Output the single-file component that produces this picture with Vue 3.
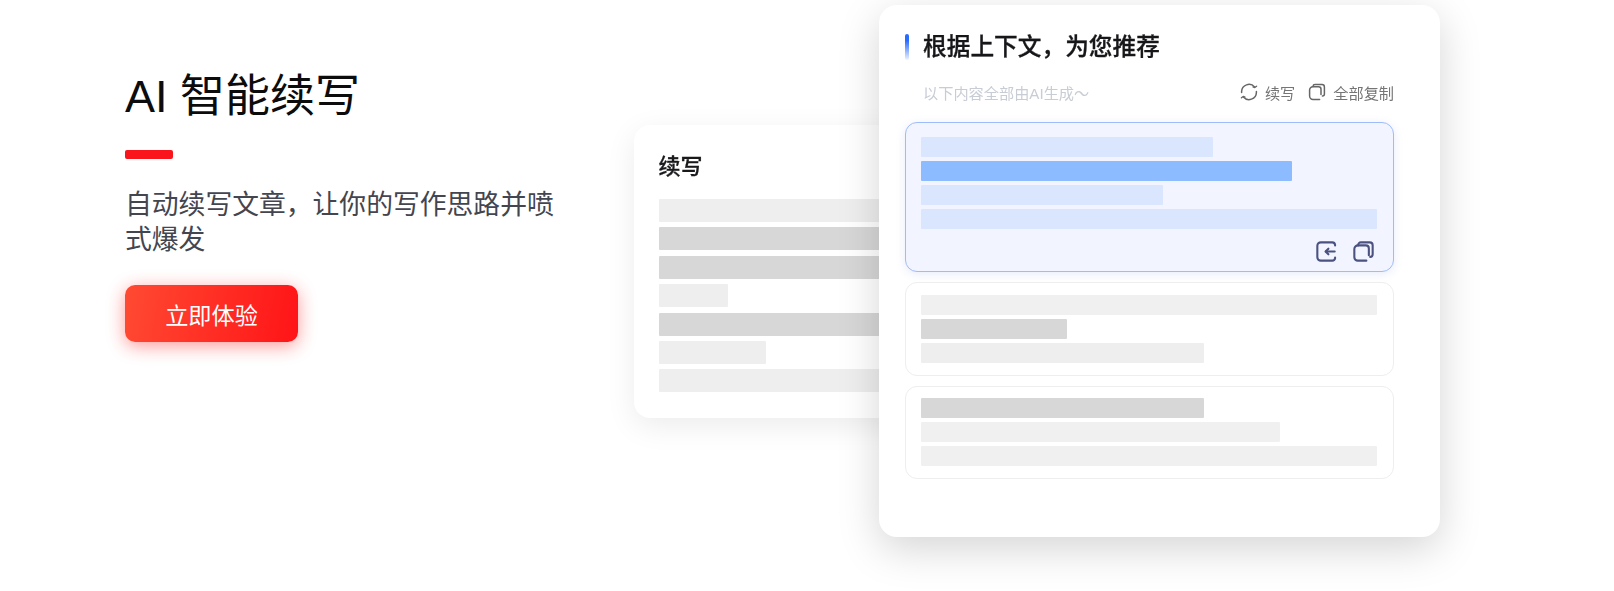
<script setup>
const backBars = [
  { w: 300, tone: 'light' },
  { w: 300, tone: 'dark' },
  { w: 300, tone: 'dark' },
  { w: 69, tone: 'light' },
  { w: 300, tone: 'dark' },
  { w: 107, tone: 'light' },
  { w: 300, tone: 'light' }
]
const activeBars = [
  { w: 292, tone: 'pale' },
  { w: 371, tone: 'blue' },
  { w: 242, tone: 'pale' },
  { w: 456, tone: 'pale' }
]
const plainItems = [
  [
    { w: 456, tone: 'soft' },
    { w: 146, tone: 'dark' },
    { w: 283, tone: 'light' }
  ],
  [
    { w: 283, tone: 'dark' },
    { w: 359, tone: 'soft' },
    { w: 456, tone: 'soft' }
  ]
]
</script>

<template>
  <main class="hero">
    <section class="intro">
      <h1 class="heading">AI 智能续写</h1>
      <div class="rule"></div>
      <p class="lead">自动续写文章，让你的写作思路并喷式爆发</p>
      <button class="cta" type="button">立即体验</button>
    </section>

    <section class="back-card">
      <h2 class="back-title">续写</h2>
      <div class="back-bars">
        <div v-for="(b, i) in backBars" :key="i" class="bar tall" :class="b.tone" :style="{ width: b.w + 'px' }"></div>
      </div>
    </section>

    <section class="front-card">
      <div class="title-row">
        <span class="accent"></span>
        <h2 class="front-title">根据上下文，为您推荐</h2>
      </div>
      <div class="sub-row">
        <span class="hint">以下内容全部由AI生成～</span>
        <span class="tools">
          <span class="tool">
            <svg class="tool-icon" viewBox="0 0 18 18" fill="none" stroke="#666" stroke-width="1.5" stroke-linecap="round" stroke-linejoin="round">
              <path d="M1.6 9.6V8.6A7.4 7.4 0 0 1 14.6 4" />
              <path d="M16.6 3.2 14.8 4.6 13 4" stroke-width="1.3" />
              <path d="M16.4 8.4V9.4A7.4 7.4 0 0 1 3.4 14" />
              <path d="M1.4 14.8 3.2 13.4 5 14" stroke-width="1.3" />
            </svg>
            续写
          </span>
          <span class="tool">
            <svg class="tool-icon" viewBox="0 0 18 18" fill="none" stroke="#666" stroke-width="1.5" stroke-linecap="round" stroke-linejoin="round">
              <path d="M5 3.6V3.4A2 2 0 0 1 7 1.6H14A2.4 2.4 0 0 1 16.4 4V11A2 2 0 0 1 14.4 13" />
              <path d="M11.6 16.4H5A3.4 3.4 0 0 1 1.6 13V7A3.2 3.2 0 0 1 4.8 3.8H10.6A2.4 2.4 0 0 1 13 6.2V11.6" />
            </svg>
            全部复制
          </span>
        </span>
      </div>

      <article class="item active">
        <div class="bars">
          <div v-for="(b, i) in activeBars" :key="i" class="bar" :class="b.tone" :style="{ width: b.w + 'px' }"></div>
        </div>
        <div class="actions">
          <svg class="action-icon" viewBox="0 0 22 22" fill="none" stroke="#4b5280" stroke-width="2.2" stroke-linecap="round" stroke-linejoin="round">
            <path d="M20 4.6V4A3 3 0 0 0 17 1.4H5A3.6 3.6 0 0 0 1.4 5V17A3.6 3.6 0 0 0 5 20.6H17A3 3 0 0 0 20 18V17.4" />
            <path d="M19.6 11H10.4" />
            <path d="M13 8 10 11 13 14" />
          </svg>
          <svg class="action-icon" viewBox="0 0 22 22" fill="none" stroke="#4b5280" stroke-width="2.2" stroke-linecap="round" stroke-linejoin="round">
            <path d="M5.4 4.6V4.2A2.8 2.8 0 0 1 8.2 1.4H17.6A3 3 0 0 1 20.6 4.4V13.8A2.8 2.8 0 0 1 18 16.6" />
            <path d="M14 20.6H5A3.6 3.6 0 0 1 1.4 17V8.4A3.8 3.8 0 0 1 5.2 4.6H13.4A3.2 3.2 0 0 1 16.6 7.8V15" />
          </svg>
        </div>
      </article>

      <article v-for="(group, g) in plainItems" :key="g" class="item plain">
        <div class="bars">
          <div v-for="(b, i) in group" :key="i" class="bar" :class="b.tone" :style="{ width: b.w + 'px' }"></div>
        </div>
      </article>
    </section>
  </main>
</template>

<style>
html,
body {
  margin: 0;
  background: #fff;
}
</style>

<style scoped>
.hero {
  display: flex;
  align-items: flex-start;
  width: 1614px;
  height: 591px;
  overflow: hidden;
  box-sizing: border-box;
  padding: 5px 0 0 125px;
  background: #fff;
  font-family: "Liberation Sans", "Noto Sans CJK SC", sans-serif;
}

.intro {
  width: 509px;
  flex: none;
  padding-top: 62px;
  box-sizing: border-box;
}

.heading {
  margin: 0;
  font-size: 45px;
  line-height: 60px;
  font-weight: 400;
  color: #0c0c0c;
}

.rule {
  width: 48px;
  height: 9px;
  margin-top: 23px;
  border-radius: 2px;
  background: #fa141c;
}

.lead {
  width: 440px;
  margin: 29px 0 0;
  font-size: 26.8px;
  line-height: 34.6px;
  color: #43454f;
}

.cta {
  display: block;
  width: 173px;
  height: 57px;
  margin-top: 28px;
  padding: 0;
  border: 0;
  border-radius: 10px;
  background: linear-gradient(100deg, #ff4a32 0%, #ff1417 100%);
  box-shadow: 0 4px 18px rgba(255, 40, 40, 0.48);
  color: #fff;
  font-family: inherit;
  font-size: 23.2px;
}

.back-card {
  width: 300px;
  height: 293px;
  flex: none;
  margin: 120px -55px 0 0;
  padding: 25px 0 0 24.5px;
  box-sizing: border-box;
  overflow: hidden;
  border-radius: 16px;
  background: #fff;
  box-shadow: 0 8px 30px rgba(0, 0, 0, 0.08);
}

.back-title {
  margin: 0;
  font-size: 22px;
  line-height: 34px;
  font-weight: 500;
  color: #1a1a1c;
  -webkit-text-stroke: 0.3px #1a1a1c;
  filter: blur(0.3px);
}

.back-bars {
  display: flex;
  flex-direction: column;
  gap: 5.4px;
  margin-top: 15px;
}

.front-card {
  position: relative;
  width: 561px;
  height: 532px;
  flex: none;
  padding: 29px 46px 0 26px;
  box-sizing: border-box;
  border-radius: 18px;
  background: #fff;
  box-shadow: 0 12px 42px rgba(0, 0, 0, 0.17);
}

.title-row {
  display: flex;
  align-items: center;
  height: 26px;
}

.accent {
  width: 4px;
  height: 26px;
  margin-right: 14px;
  border-radius: 2px;
  background: linear-gradient(180deg, #2a6bff 0%, #2a6bff 25%, rgba(120, 165, 255, 0.12) 100%);
}

.front-title {
  margin: 0;
  font-size: 23.7px;
  line-height: 26px;
  font-weight: 500;
  color: #17171a;
  -webkit-text-stroke: 0.3px #17171a;
  filter: blur(0.3px);
}

.sub-row {
  display: flex;
  align-items: center;
  justify-content: space-between;
  height: 24px;
  margin-top: 20px;
  padding-left: 18px;
  filter: blur(0.3px);
}

.hint {
  font-size: 15.2px;
  color: #c8ccd4;
}

.tools {
  display: flex;
  gap: 13px;
}

.tool {
  display: flex;
  align-items: center;
  gap: 7px;
  font-size: 15.2px;
  color: #757575;
}

.tool-icon {
  width: 18px;
  height: 18px;
}

.item {
  box-sizing: border-box;
  margin-top: 10px;
  padding: 11.5px 15px 0 14.5px;
  border-radius: 12px;
}

.active {
  height: 150px;
  margin-top: 18px;
  padding-top: 13.5px;
  border: 1.5px solid #9fbcfa;
  background: #f2f5ff;
  box-shadow: 0 2px 10px rgba(90, 120, 220, 0.14);
}

.plain {
  height: 93.5px;
  border: 1.5px solid #eeeeee;
}

.bars {
  display: flex;
  flex-direction: column;
  gap: 4px;
}

.bar {
  height: 20px;
  flex: none;
  border-radius: 1px;
}

.bar.tall {
  height: 23px;
}

.pale {
  background: #d9e6fe;
}

.blue {
  background: #8cbbff;
}

.dark {
  background: #d7d7d7;
}

.light {
  background: #eeeeee;
}

.soft {
  background: #f0f0f0;
}

.actions {
  display: flex;
  justify-content: flex-end;
  gap: 16px;
  margin-top: 12.5px;
  padding-right: 4px;
}

.action-icon {
  width: 21px;
  height: 21px;
  filter: blur(0.25px);
}
</style>
